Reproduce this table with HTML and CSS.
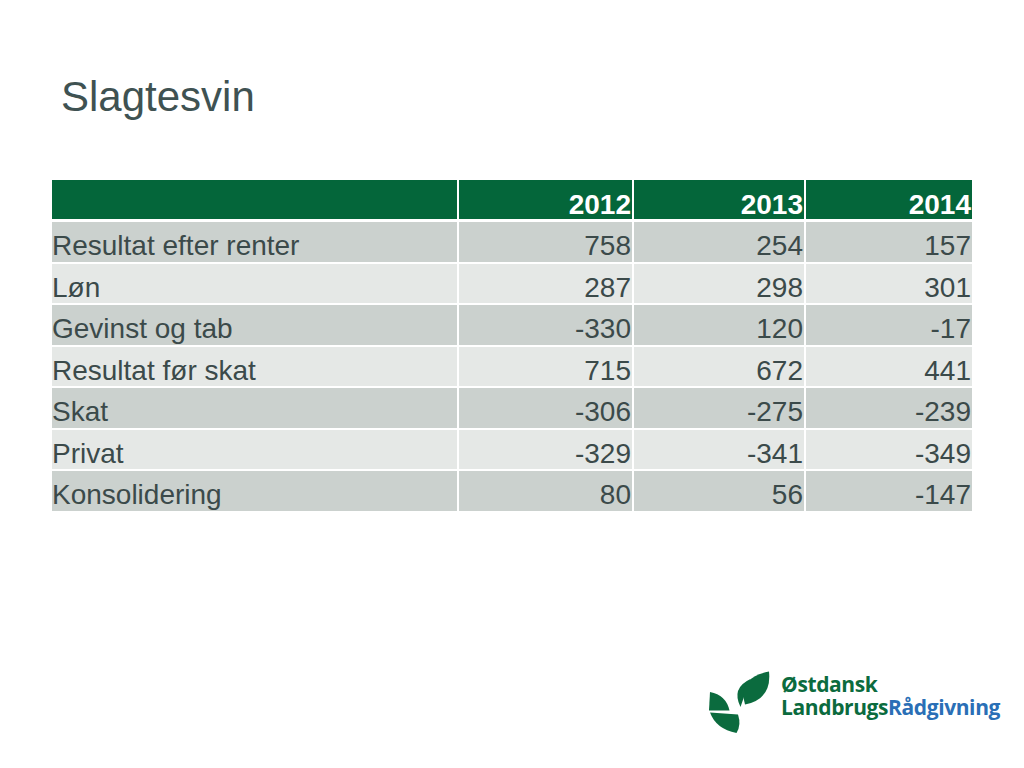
FILE: index.html
```html
<!DOCTYPE html>
<html lang="da">
<head>
<meta charset="utf-8">
<title>Slagtesvin</title>
<link rel="stylesheet" href="styles.css">
</head>
<body>
<div class="slide">
  <h1 class="title">Slagtesvin</h1>
  <div class="table">
    <div class="row head">
      <div class="cell"></div>
      <div class="cell num">2012</div>
      <div class="cell num">2013</div>
      <div class="cell num">2014</div>
    </div>
    <div class="row odd">
      <div class="cell">Resultat efter renter</div>
      <div class="cell num">758</div>
      <div class="cell num">254</div>
      <div class="cell num">157</div>
    </div>
    <div class="row even">
      <div class="cell">Løn</div>
      <div class="cell num">287</div>
      <div class="cell num">298</div>
      <div class="cell num">301</div>
    </div>
    <div class="row odd">
      <div class="cell">Gevinst og tab</div>
      <div class="cell num">-330</div>
      <div class="cell num">120</div>
      <div class="cell num">-17</div>
    </div>
    <div class="row even">
      <div class="cell">Resultat før skat</div>
      <div class="cell num">715</div>
      <div class="cell num">672</div>
      <div class="cell num">441</div>
    </div>
    <div class="row odd">
      <div class="cell">Skat</div>
      <div class="cell num">-306</div>
      <div class="cell num">-275</div>
      <div class="cell num">-239</div>
    </div>
    <div class="row even">
      <div class="cell">Privat</div>
      <div class="cell num">-329</div>
      <div class="cell num">-341</div>
      <div class="cell num">-349</div>
    </div>
    <div class="row odd">
      <div class="cell">Konsolidering</div>
      <div class="cell num">80</div>
      <div class="cell num">56</div>
      <div class="cell num">-147</div>
    </div>
  </div>
  <div class="logo">
    <svg class="leaves" width="70" height="68" viewBox="0 0 70 68">
      <path d="M5,24 Q21,27 24.5,42.5 L4,42.5 Z" fill="#0b6b3e"/>
      <path d="M5,44.5 L33,46.5 Q36.5,57 31.5,65 Q11,61 5,44.5 Z" fill="#0b6b3e"/>
      <path d="M45.5,11 Q26,20 35.5,39 Q41,23 45.5,11 Z" fill="#0b6b3e"/>
      <path d="M40,36.5 Q32,10 64,3.5 Q67,31 40,36.5 Z" fill="#0b6b3e"/>
    </svg>
    <div class="logo-text">
      <div class="l1">Østdansk</div>
      <div class="l2">Landbrugs<span class="blue">Rådgivning</span></div>
    </div>
  </div>
</div>
</body>
</html>
```
FILE: styles.css
```css
html, body {
  margin: 0;
  padding: 0;
  background: #ffffff;
}
.slide {
  width: 1024px;
  height: 768px;
  display: flex;
  flex-direction: column;
  box-sizing: border-box;
  padding: 0 52px;
  font-family: "Liberation Sans", Arial, sans-serif;
  color: #3b4a4a;
}
.title {
  margin: 73px 0 0 9px;
  font-weight: normal;
  font-size: 42px;
  line-height: 48px;
  color: #3f5252;
}
.table {
  margin-top: 59px;
  width: 920px;
  display: flex;
  flex-direction: column;
  gap: 2px;
}
.row {
  display: grid;
  grid-template-columns: 405px 173px 170px 166px;
  column-gap: 2px;
  font-size: 28px;
}
.cell {
  height: 39.5px;
  box-sizing: border-box;
  padding-top: 9px;
  line-height: 30.5px;
  white-space: nowrap;
}
.num {
  text-align: right;
  padding-right: 1px;
}
.head {
  margin-bottom: 1.5px;
}
.head .cell {
  height: 38.5px;
  padding-top: 0;
  background: #04663a;
  color: #ffffff;
  font-weight: bold;
  display: flex;
  align-items: flex-end;
  justify-content: flex-end;
  line-height: 28px;
}
.odd .cell {
  background: #cbd1ce;
}
.even .cell {
  background: #e5e8e6;
}
.logo {
  margin-top: auto;
  margin-bottom: 32px;
  margin-right: -28px;
  align-self: flex-end;
  display: flex;
  align-items: flex-start;
  gap: 6px;
}
.leaves {
  display: block;
}
.logo-text {
  font-family: "Open Sans", "Noto Sans", sans-serif;
  font-weight: bold;
  font-size: 21px;
  line-height: 22.5px;
  letter-spacing: -0.4px;
  color: #0b6b3e;
  padding-top: 5px;
}
.blue {
  color: #2a6fb6;
}
```
